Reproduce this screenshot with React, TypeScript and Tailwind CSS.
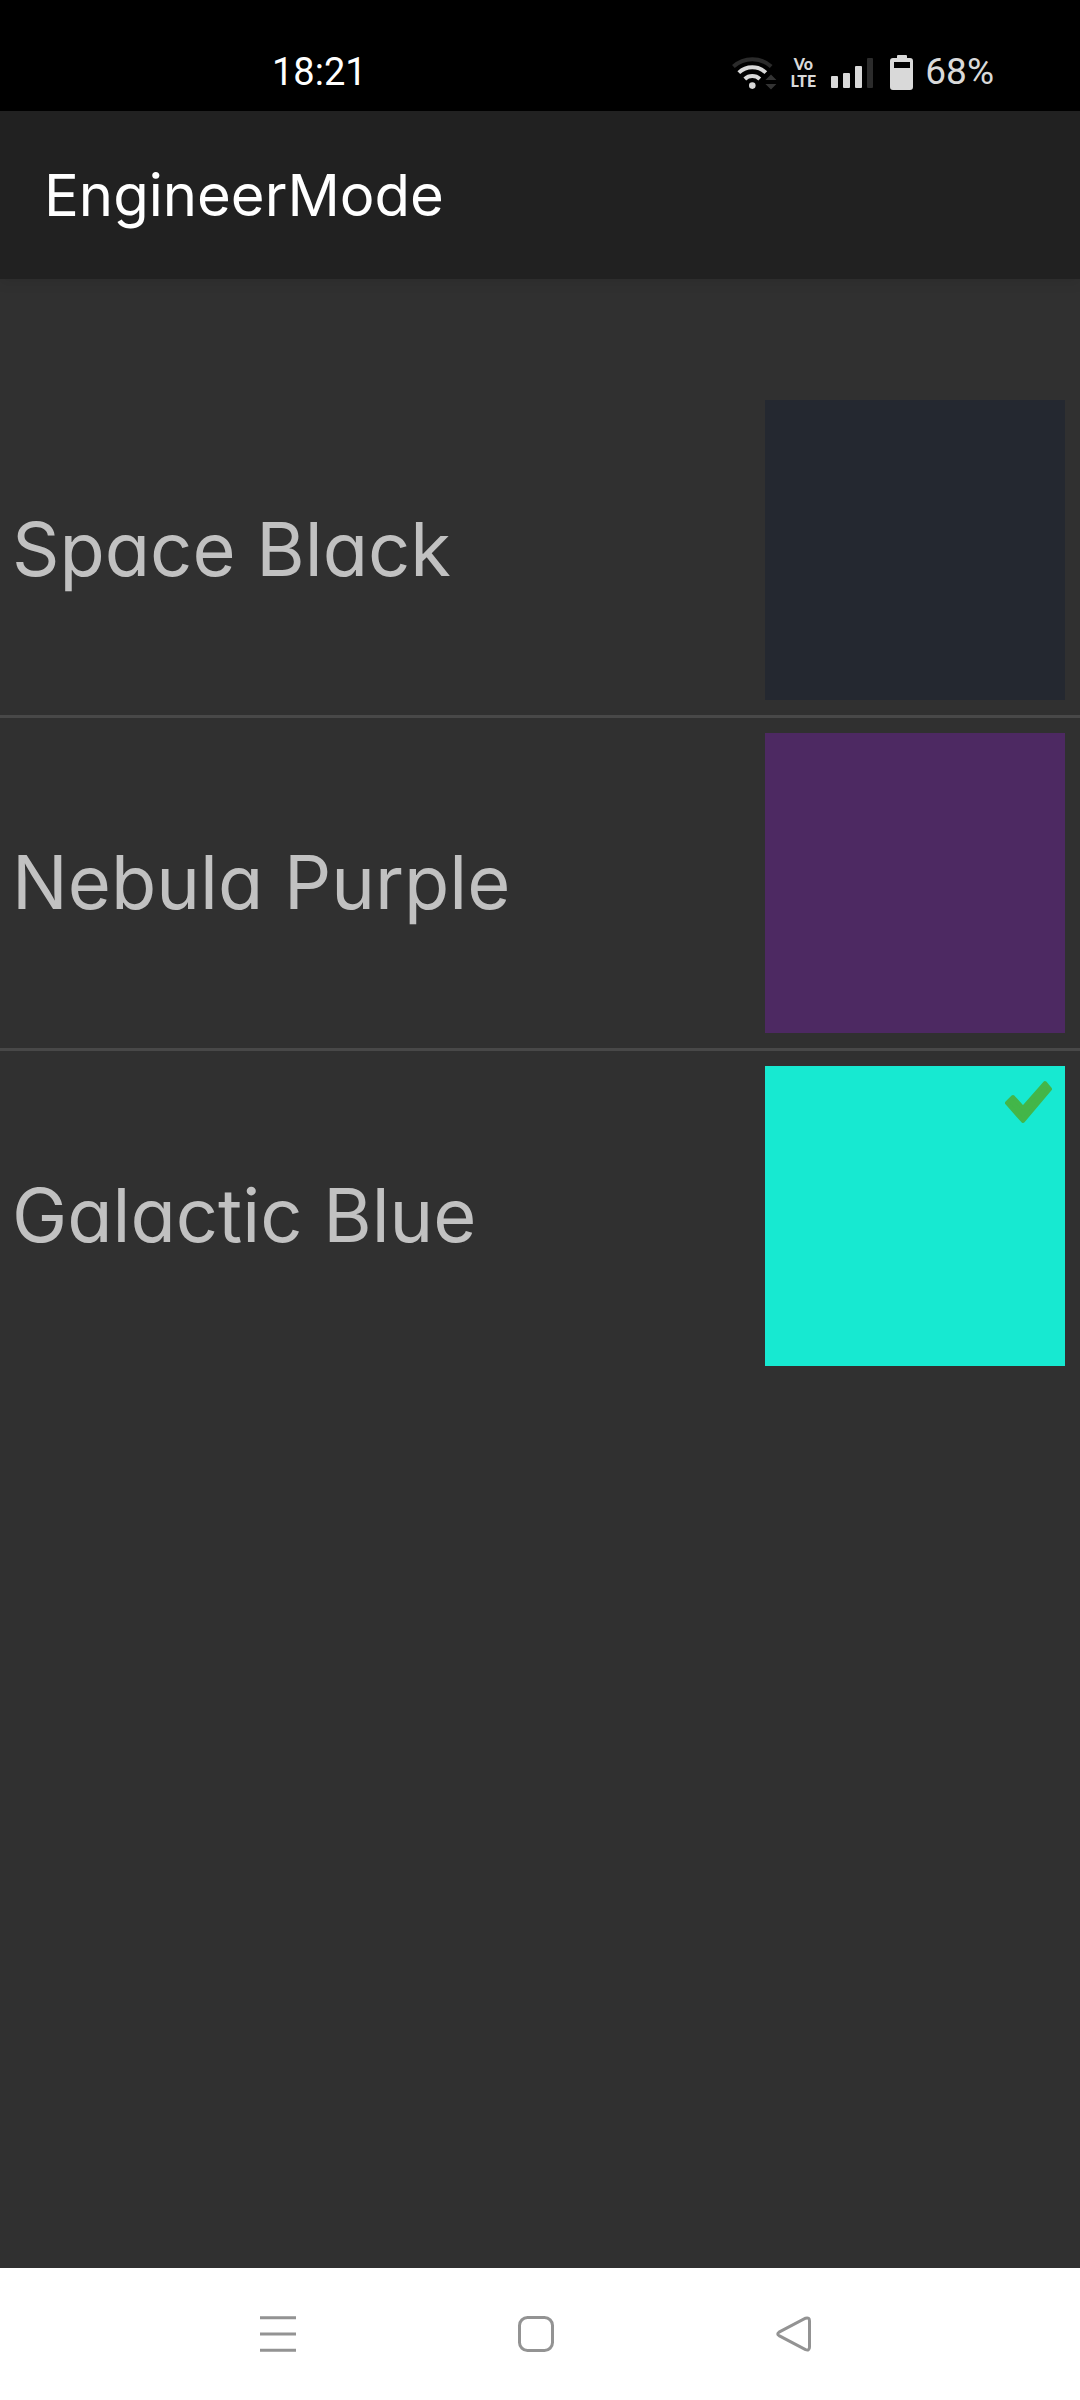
import { useState } from 'react';

interface ShellColor {
    name: string;
    swatch: string;
}

const COLORS: ShellColor[] = [
    { name: 'Space Black', swatch: 'bg-[#242830]' },
    { name: 'Nebula Purple', swatch: 'bg-[#4d2962]' },
    { name: 'Galactic Blue', swatch: 'bg-[#17e9d1]' },
];

function WifiIcon() {
    return (
        <svg width="44" height="36" viewBox="0 0 44 36" fill="none" strokeWidth="4" className="overflow-visible">
            <path d="M2.4 12.6 A28 28 0 0 1 40.2 12.6" stroke="#2b2b2b" />
            <path d="M7.8 18.6 A19.5 19.5 0 0 1 34.8 18.6" stroke="#d9d9d9" />
            <path d="M13.8 25 A11 11 0 0 1 28.8 25" stroke="#d9d9d9" />
            <circle cx="21.3" cy="31.6" r="3.3" fill="#d9d9d9" />
            <path d="M34.4 26 L40 20.4 L45.4 26 Z M34.4 30 L40 35.6 L45.4 30 Z" fill="#333" />
        </svg>
    );
}

function SignalIcon() {
    return (
        <svg width="43" height="36" viewBox="0 0 43 36" fill="#d9d9d9">
            <rect x="0" y="22" width="7" height="12" rx="1" />
            <rect x="12" y="19" width="7" height="15" rx="1" />
            <rect x="24" y="12" width="7" height="22" rx="1" />
            <rect x="36" y="4" width="6" height="30" rx="1" fill="#2b2b2b" />
        </svg>
    );
}

function BatteryIcon() {
    return (
        <svg width="23" height="36" viewBox="0 0 23 36">
            <path
                fillRule="evenodd"
                fill="#d9d9d9"
                d="M8 1h8a1 1 0 0 1 1 1v2h3a3 3 0 0 1 3 3v26a3 3 0 0 1-3 3H3a3 3 0 0 1-3-3V7a3 3 0 0 1 3-3h4V2a1 1 0 0 1 1-1ZM4 8v6h16V8Z"
            />
        </svg>
    );
}

function StatusBar() {
    return (
        <div className="flex h-[111px] items-center justify-between bg-black pt-8 pr-[86px] pl-[272px] font-['Roboto',sans-serif]">
            <span className="text-[38px] leading-none text-white">18:21</span>
            <div className="flex items-center gap-4 text-[#d9d9d9]">
                <WifiIcon />
                <span className="flex w-6 flex-col items-center font-['Lato',sans-serif] text-[16px] leading-[17px] font-black">
                    <span>Vo</span>
                    <span>LTE</span>
                </span>
                <SignalIcon />
                <span className="flex items-center gap-3">
                    <BatteryIcon />
                    <span className="text-[37px] leading-none">68%</span>
                </span>
            </div>
        </div>
    );
}

function CheckMark() {
    return (
        <svg width="50" height="46" viewBox="0 0 50 46" className="absolute top-[14px] right-[11px]">
            <path
                d="M3 23 L9 17 L19 28 L41 3 L46 9 L19 41 Z"
                fill="#43b649"
                stroke="#43b649"
                strokeWidth="4"
                strokeLinejoin="round"
            />
        </svg>
    );
}

function NavBar() {
    return (
        <nav className="flex h-[132px] items-center justify-center gap-[222px] bg-white pr-2 text-[#939393]">
            <button type="button" aria-label="Recent apps">
                <svg width="36" height="36" viewBox="0 0 36 36" stroke="currentColor" strokeWidth="3">
                    <path d="M0 1.7H36M0 18H36M0 34.3H36" />
                </svg>
            </button>
            <button type="button" aria-label="Home">
                <svg width="36" height="36" viewBox="0 0 36 36" fill="none" stroke="currentColor" strokeWidth="3">
                    <rect x="1.5" y="1.5" width="33" height="33" rx="8" />
                </svg>
            </button>
            <button type="button" aria-label="Back">
                <svg width="36" height="36" viewBox="0 0 36 36" fill="none" stroke="currentColor" strokeWidth="3">
                    <path d="M3 16.2 L29.5 2.2 Q33.5 1 33.5 5 V31 Q33.5 35 29.5 33.6 L3 19.6 Q0.5 17.9 3 16.2 Z" />
                </svg>
            </button>
        </nav>
    );
}

export default function App() {
    const [selected, setSelected] = useState('Galactic Blue');

    return (
        <div className="flex min-h-screen flex-col bg-[#303030] font-['Inter',sans-serif] [font-feature-settings:'cv11']">
            <StatusBar />
            <header className="flex h-[168px] items-center bg-[#212121] px-[44px] shadow-[0_4px_12px_rgba(0,0,0,0.08)]">
                <h1 className="text-[58px] leading-none text-white">EngineerMode</h1>
            </header>
            <main className="flex-1 pt-[106px]">
                <ul className="divide-y-3 divide-[#484848]">
                    {COLORS.map((color) => (
                        <li key={color.name}>
                            <button
                                type="button"
                                aria-pressed={selected === color.name}
                                onClick={() => setSelected(color.name)}
                                className="flex w-full items-center justify-between py-[15px] pr-[15px] pl-3 text-left"
                            >
                                <span className="pb-[2px] text-[74px] leading-none text-[#c1c1c1]">{color.name}</span>
                                <span className={`relative size-[300px] shrink-0 ${color.swatch}`}>
                                    {selected === color.name && <CheckMark />}
                                </span>
                            </button>
                        </li>
                    ))}
                </ul>
            </main>
            <NavBar />
        </div>
    );
}
